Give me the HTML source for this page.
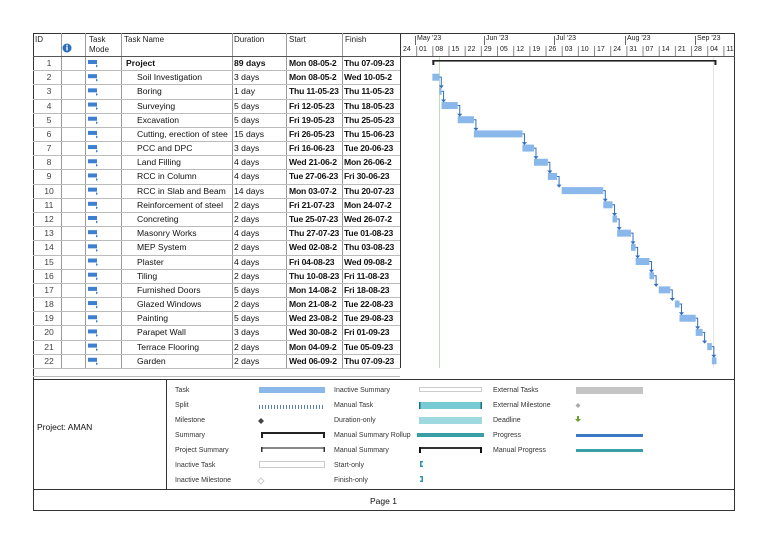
<!DOCTYPE html>
<html><head><meta charset="utf-8"><style>
*{margin:0;padding:0;box-sizing:border-box}
body{width:768px;height:543px;background:#fff;position:relative;font-family:"Liberation Sans",sans-serif;color:#111;overflow:hidden}
.a{position:absolute;white-space:nowrap}
.hd{font-size:8px;color:#222}
.c{font-size:8.6px}
.lg{font-size:7px;color:#333}
</style></head><body>
<div id="root"></div>
<svg id="s" class="a" style="left:0;top:0" width="768" height="543"></svg>
<script>
var s=document.getElementById('s'),root=document.getElementById('root');
function L(x1,y1,x2,y2,c,w){s.innerHTML+='<line x1="'+x1+'" y1="'+y1+'" x2="'+x2+'" y2="'+y2+'" stroke="'+(c||'#000')+'" stroke-width="'+(w||1)+'"/>';}
function R(x,y,w,h,f,st){s.innerHTML+='<rect x="'+x+'" y="'+y+'" width="'+w+'" height="'+h+'" fill="'+f+'"'+(st?' stroke="'+st+'" stroke-width="1"':'')+'/>';}
function T(x,y,t,cls,extra){root.innerHTML+='<div class="a '+cls+'" style="left:'+x+'px;top:'+y+'px;'+(extra||'')+'">'+t+'</div>';}
// outer frame
R(33.5,33.5,701,477,'none','#333');
L(33,379.5,735,379.5,'#333');L(33,489.5,735,489.5,'#333');L(166.5,379,166.5,489,'#333');
// table grid
var cols=[61,85,121,232,286,342,400];
cols.forEach(function(x){L(x+.5,33,x+.5,368,'#999');});
L(400.5,33,400.5,368,'#333');
L(33,56.5,735,56.5,'#555');
var rh=14.18,top0=56;
for(var i=1;i<=22;i++){var y=Math.round(top0+i*rh)+.5;L(33,y,400,y,'#bbb');}
L(33,376.5,400,376.5,'#bbb');
// headers
T(35,35,'ID','hd');T(89,35,'Task<br>Mode','hd','line-height:10px');T(124,35,'Task Name','hd');T(234,35,'Duration','hd');T(289,35,'Start','hd');T(345,35,'Finish','hd');
s.innerHTML+='<circle cx="67" cy="48" r="4.5" fill="#2a6ebb"/><rect x="66.3" y="46.5" width="1.4" height="4" fill="#fff"/><rect x="66.3" y="44.7" width="1.4" height="1.2" fill="#fff"/>';
var rows=[
['Project','89 days','Mon 08-05-2','Thu 07-09-23',14,136],
['Soil Investigation','3 days','Mon 08-05-2','Wed 10-05-2',14,16],
['Boring','1 day','Thu 11-05-23','Thu 11-05-23',17,17],
['Surveying','5 days','Fri 12-05-23','Thu 18-05-23',18,24],
['Excavation','5 days','Fri 19-05-23','Thu 25-05-23',25,31],
['Cutting, erection of stee','15 days','Fri 26-05-23','Thu 15-06-23',32,52],
['PCC and DPC','3 days','Fri 16-06-23','Tue 20-06-23',53,57],
['Land Filling','4 days','Wed 21-06-2','Mon 26-06-2',58,63],
['RCC in Column','4 days','Tue 27-06-23','Fri 30-06-23',64,67],
['RCC in Slab and Beam','14 days','Mon 03-07-2','Thu 20-07-23',70,87],
['Reinforcement of steel','2 days','Fri 21-07-23','Mon 24-07-2',88,91],
['Concreting','2 days','Tue 25-07-23','Wed 26-07-2',92,93],
['Masonry Works','4 days','Thu 27-07-23','Tue 01-08-23',94,99],
['MEP System','2 days','Wed 02-08-2','Thu 03-08-23',100,101],
['Plaster','4 days','Fri 04-08-23','Wed 09-08-2',102,107],
['Tiling','2 days','Thu 10-08-23','Fri 11-08-23',108,109],
['Furnished Doors','5 days','Mon 14-08-2','Fri 18-08-23',112,116],
['Glazed Windows','2 days','Mon 21-08-2','Tue 22-08-23',119,120],
['Painting','5 days','Wed 23-08-2','Tue 29-08-23',121,127],
['Parapet Wall','3 days','Wed 30-08-2','Fri 01-09-23',128,130],
['Terrace Flooring','2 days','Mon 04-09-2','Tue 05-09-23',133,134],
['Garden','2 days','Wed 06-09-2','Thu 07-09-23',135,136]];
var dpx=2.31,gx=400;
// gantt guides
L(439.5,57,439.5,368,'#bfe0b8');L(713.5,57,713.5,368,'#e4e4e4');
var prev=null;
rows.forEach(function(r,k){
 var y=top0+k*rh, ty=y+2;
 T(44,ty,String(k+1),'c','color:#444;width:10px;text-align:center');
 s.innerHTML+='<rect x="88" y="'+(y+4)+'" width="9" height="4" fill="#3d7fd0"/><path d="M96 '+(y+8.5)+'l2 1.5l-2 1.5z" fill="#3d7fd0"/>';
 var b=k==0?'font-weight:bold;':'';
 T(k==0?126:137,ty,r[0],'c',b+'width:95px;overflow:hidden');
 T(234,ty,r[1],'c',b);
 T(289,ty,r[2],'c','font-weight:bold;width:54px;overflow:hidden;letter-spacing:-.2px');
 T(344,ty,r[3],'c','font-weight:bold;width:56px;overflow:hidden;letter-spacing:-.2px');
 var x1=gx+r[4]*dpx,x2=gx+(r[5]+1)*dpx;
 if(k==0){R(x1,y+4,x2-x1,1.6,'#222');R(x1,y+4,2,5,'#222');R(x2-2,y+4,2,5,'#222');}
 else{R(x1,y+3.5,x2-x1,7,'#8bb8ea');
  if(prev){var px=prev[0],py=prev[1];s.innerHTML+='<path d="M'+px+' '+py+'h2v'+(y+3.5-py-2)+'" stroke="#2f6ec4" fill="none" stroke-width="1"/><path d="M'+(px-0.5)+' '+(y+1)+'h5l-2.5 3z" fill="#2f6ec4"/>';}
  prev=[x2,y+7];}
});
// timescale
var months=[['May \'23',417],['Jun \'23',486],['Jul \'23',556],['Aug \'23',627],['Sep \'23',697]];
months.forEach(function(m){L(m[1]-1.5,36,m[1]-1.5,45,'#666');T(m[1],35,m[0],'hd','font-size:7px');});
var days=['24','01','08','15','22','29','05','12','19','26','03','10','17','24','31','07','14','21','28','04','11'];
days.forEach(function(d,i){var x=400+i*16.17;if(i>0)L(x+.5,46,x+.5,56,'#888');T(x+3,46,d,'hd','font-size:7px');});
// legend
T(37,422,'Project: AMAN','c','font-size:8.5px');
var lx=[175,334,493],ly=[387,402,417,432,447,462,477];
var labs=[['Task','Split','Milestone','Summary','Project Summary','Inactive Task','Inactive Milestone'],['Inactive Summary','Manual Task','Duration-only','Manual Summary Rollup','Manual Summary','Start-only','Finish-only'],['External Tasks','External Milestone','Deadline','Progress','Manual Progress']];
labs.forEach(function(c,i){c.forEach(function(t,j){T(lx[i],ly[j],t,'lg');});});
R(259,387,66,6,'#8bb8ea');
for(var q=0;q<22;q++)R(259+q*3,405,1,4,'#5a7fb0');
s.innerHTML+='<path d="M261 418l3 3l-3 3l-3-3z" fill="#444"/>';
R(261,432,64,2,'#222');R(261,432,2,6,'#222');R(323,432,2,6,'#222');
R(261,447,64,2,'#888');R(261,447,1.5,5,'#333');R(323.5,447,1.5,5,'#333');
R(259.5,461.5,65,6,'#fff','#ccc');
s.innerHTML+='<path d="M261 478l3 3l-3 3l-3-3z" fill="none" stroke="#ccc"/>';
R(419.5,387.5,62,4,'#fff','#ccc');
R(419,402,63,7,'#78cbd3');R(419,402,1.5,7,'#1a6f85');R(480.5,402,1.5,7,'#1a6f85');
R(419,417,63,7,'#9ed9df');
R(417,433,67,4,'#3a9ea6');
R(419,447,63,2,'#333');R(419,447,2,6,'#111');R(480,447,2,6,'#111');
s.innerHTML+='<path d="M420 461h3v1.5h-1.5v3h1.5v1.5h-3z" fill="#2a98a5"/><path d="M423 476h-3v1.5h1.5v3h-1.5v1.5h3z" fill="#2a98a5"/>';
R(576,387,67,7,'#c4c4c4');
s.innerHTML+='<path d="M578 403l2.5 2.5l-2.5 2.5l-2.5-2.5z" fill="#aaa"/><path d="M577 416h2v3h2l-3 3l-3-3h2z" fill="#6aa32a"/>';
R(576,434,67,3,'#3b78c4');R(576,449,67,3,'#3a9ea6');
T(370,496,'Page 1','c','font-size:8.5px');
</script>
</body></html>
